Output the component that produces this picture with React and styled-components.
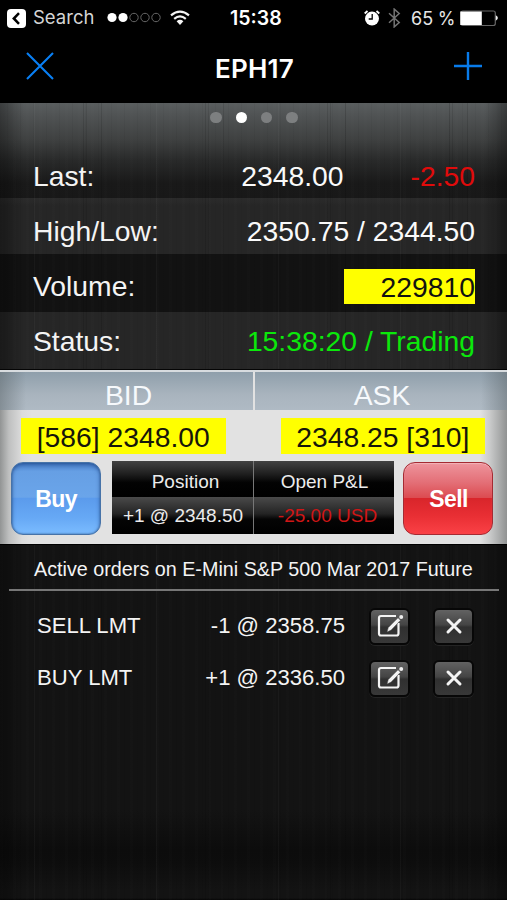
import React from "react";
import styled, { createGlobalStyle } from "styled-components";

const GlobalStyle = createGlobalStyle`
  * { box-sizing: border-box; }
  body { margin: 0; background: #000; }
`;

const brushed = `
  linear-gradient(90deg, rgba(0,0,0,.35) 0, rgba(0,0,0,.2) 10px, rgba(0,0,0,0) 24px, rgba(0,0,0,0) 485px, rgba(0,0,0,.35) 507px),
  repeating-linear-gradient(90deg, transparent 0 34px, rgba(255,255,255,.03) 34px 35px, transparent 35px 83px, rgba(0,0,0,.12) 83px 84px, transparent 84px 86px, rgba(0,0,0,.1) 86px 87px, transparent 87px 101px, rgba(0,0,0,.12) 101px 102px, transparent 102px 122px),
  repeating-linear-gradient(90deg, rgba(255,255,255,.008) 0 3px, transparent 3px 7px, rgba(0,0,0,.04) 7px 8px, transparent 8px 13px)`;

const Screen = styled.div`
  width: 507px;
  height: 900px;
  overflow: hidden;
  display: flex;
  flex-direction: column;
  background: #000;
  color: #f4f4f4;
  font-family: "Liberation Sans", Arial, sans-serif;
  white-space: nowrap;
`;

const StatusBar = styled.div`
  height: 36px;
  display: grid;
  grid-template-columns: 230px 54px 1fr;
  align-items: center;
  font-family: Inter, "Liberation Sans", sans-serif;
  font-size: 18.5px;
  color: #e6e6e6;
`;
const StatusGroup = styled.div`
  display: flex;
  align-items: center;
  height: 36px;
  padding-left: ${(p) => p.$left}px;
`;
const BackLabel = styled.span`
  width: 74px;
  margin: -2px 0 0 7px;
  color: #d5d5d5;
`;
const Clock = styled.span`
  font-weight: 600;
  font-size: 19.5px;
  color: #fff;
`;
const Percent = styled.span`
  width: 49px;
  margin-left: 10px;
  font-size: 18px;
  word-spacing: -0.5px;
`;

const NavBar = styled.div`
  height: 67px;
  display: grid;
  grid-template-columns: 80px 1fr 80px;
  align-items: start;
  padding-top: 16px;
`;
const NavIcon = styled.div`
  display: flex;
  padding-left: ${(p) => p.$left}px;
`;
const Title = styled.div`
  text-align: center;
  font: 600 26px/34px Inter, sans-serif;
  letter-spacing: 0.2px;
  color: #fff;
  padding-left: 2px;
`;

const PageDots = styled.div`
  display: flex;
  justify-content: center;
  gap: 14px;
  height: 45px;
  padding: 9px 0 0 1px;
`;
const Dot = styled.span`
  width: 11.4px;
  height: 11.4px;
  border-radius: 50%;
  background: ${(p) => (p.$active ? "#fff" : "#7d7f80")};
`;

const Summary = styled.div`
  height: 95px;
  background: ${brushed}, linear-gradient(#5a5e5f 0, #505354 12px, #3f4141 36px, #292a2a 57px, #191919 80px, #181818 95px);
`;
const QuoteRow = styled.div`
  height: ${(p) => p.$height}px;
  padding: ${(p) => p.$top}px 32px 0 33px;
  display: flex;
  align-items: center;
  font-size: 28.3px;
  line-height: 34px;
  ${(p) => p.$bg && `background: ${brushed}, ${p.$bg};`}
`;
const QuoteLabel = styled.span`
  flex: 1;
`;
const QuoteValue = styled.span`
  color: ${(p) => p.$color || "#fafafa"};
  margin-left: ${(p) => p.$gap || 0}px;
`;
const VolumeValue = styled.span`
  width: 131px;
  height: 35px;
  line-height: 36px;
  background: #ff0;
  color: #111;
  text-align: right;
`;

const TradePanel = styled.div`
  height: 175px;
  border-top: 1px solid #050505;
  background: linear-gradient(90deg, #929494 0, #bfc0c0 9px, #dcdcdc 22px, #e2e2e2 32px, #e2e2e2 480px, #c9caca 490px, #909292 507px);
`;
const SideHeads = styled.div`
  display: grid;
  grid-template-columns: 253px 252px;
  grid-template-rows: 38px;
  gap: 2px;
  height: 40px;
  border-top: 2px solid #d8dcdf;
`;
const SideHead = styled.div`
  background: linear-gradient(90deg, ${(p) => (p.$right ? "transparent 226px, rgba(90,100,105,.5) 252px" : "rgba(90,100,105,.5) 0, transparent 26px")}),
    linear-gradient(#8f9fab, #a9b4be 60%, #afbac4);
  color: #f6f9fc;
  font-size: 28.3px;
  line-height: 47px;
  padding-left: ${(p) => (p.$right ? 2 : 4)}px;
  text-align: center;
`;
const Prices = styled.div`
  display: flex;
  gap: 55px;
  padding: 8px 21px 0;
`;
const Price = styled.div`
  width: 204.5px;
  height: 36px;
  line-height: 38px;
  font-size: 28.3px;
  text-align: center;
  background: #ff0;
  color: #16160a;
`;
const TradeControls = styled.div`
  display: flex;
  align-items: flex-start;
  padding: 7px 14px 0 11px;
`;
const TradeButton = styled.button`
  width: 90px;
  height: 73px;
  margin: 1px 0 0;
  padding: 2px 0 0 ${(p) => (p.$sell ? 1 : 0)}px;
  border-radius: 12px;
  border: 1px solid ${(p) => (p.$sell ? "#a52a32" : "#4773a8")};
  background: ${(p) =>
    p.$sell
      ? "linear-gradient(#ee949c 0, #e36e76 28%, #dc4b50 49%, #d9252b 50%, #e92f34 75%, #fa4146 100%)"
      : "linear-gradient(#4b82cc 0, #669fe4 12%, #6aa5ea 48%, #5b9bec 50%, #67a9f5 78%, #7bbcff 100%)"};
  box-shadow: ${(p) => (p.$sell ? "inset 0 1px 1px rgba(255,255,255,.3)" : "inset 0 2px 4px rgba(22,60,125,.55), inset 0 0 2px #38639b")};
  color: #fff;
  font: bold 23px "Liberation Sans", Arial, sans-serif;
  letter-spacing: -0.6px;
`;
const PositionTable = styled.div`
  display: grid;
  grid-template-columns: 141px 140px;
  grid-template-rows: 36px 37px;
  column-gap: 1px;
  width: 282px;
  margin: 0 9px 0 11px;
  background: #777;
`;
const PositionCell = styled.div`
  background: ${(p) => (p.$value ? "linear-gradient(#4a4a4a, #242424 45%, #050505 60%, #000)" : "linear-gradient(#424242, #202020 35%, #030303 60%, #000)")};
  color: ${(p) => p.$color || "#ececec"};
  font-size: 19px;
  line-height: ${(p) => (p.$value ? 37 : 42)}px;
  padding-left: ${(p) => p.$left || 0}px;
  text-align: center;
`;

const Orders = styled.div`
  flex: 1;
  border-top: 1px solid #000;
  background: ${brushed}, linear-gradient(#131313 0, #131313 265px, #0c0c0c 305px, #0d0d0d 318px, #131313 345px, #131313 353px, #000 356px);
`;
const OrdersTitle = styled.h2`
  margin: 0 8px 0 9px;
  height: 46px;
  border-bottom: 2px solid #777;
  padding-left: 25px;
  font-size: 19.75px;
  font-weight: 400;
  line-height: 48px;
`;
const OrderRow = styled.div`
  display: grid;
  grid-template-columns: 130px 178px 40px 40px;
  column-gap: 24px;
  align-items: center;
  height: 52px;
  padding-left: 37px;
  font-size: 22.1px;
`;
const OrderList = styled.div`
  padding-top: 9px;
`;
const OrderPrice = styled.span`
  width: 178px;
  margin-left: -24px;
  text-align: right;
`;
const IconButton = styled.button`
  width: 41px;
  height: 37px;
  margin-left: -24px;
  padding: 0;
  border: 2px solid #070707;
  border-radius: 6px;
  background: linear-gradient(#626262, #444 45%, #303030 52%, #383838);
  box-shadow: 0 1px 0 #242424;
  display: flex;
  align-items: center;
  justify-content: center;
`;

const BackIcon = () => (
  <svg width="19" height="19" viewBox="0 0 19 19">
    <rect width="19" height="19" rx="4" fill="#fff" />
    <path d="M12 4.2 6.8 9.5 12 14.8" fill="none" stroke="#000" strokeWidth="2.5" />
  </svg>
);
const SignalIcon = () => (
  <svg width="63" height="12" viewBox="0 0 63 12">
    {[5, 16, 27, 38, 49].map((x, i) => (
      <circle key={x} cx={x} cy="5.5" r={i < 2 ? 4.6 : 4.2} fill={i < 2 ? "#fff" : "none"} stroke={i < 2 ? "none" : "#666"} strokeWidth="1" />
    ))}
  </svg>
);
const WifiIcon = () => (
  <svg width="20" height="16" viewBox="0 0 20 16" fill="none" stroke="#f5f5f5" strokeWidth="2.2">
    <path d="M1 5.4Q10-2 19 5.4M4.2 8.8Q10 4 15.8 8.8" />
    <path d="M6.6 11.2Q10 8.4 13.4 11.2L10 14.9Z" fill="#f5f5f5" stroke="none" />
  </svg>
);
const AlarmIcon = () => (
  <svg width="16" height="17" viewBox="0 0 16 17">
    <circle cx="8" cy="8.6" r="7" fill="#fff" />
    <path d="M.7 3.5 3.5 1M15.3 3.5 12.5 1" stroke="#fff" strokeWidth="1.8" />
    <path d="M8.2 4v5H4.7" stroke="#000" strokeWidth="1.3" fill="none" />
  </svg>
);
const BluetoothIcon = () => (
  <svg width="13" height="20" viewBox="0 0 13 20" fill="none" stroke="#747474" strokeWidth="1.5">
    <path d="m1 5.3 10.2 9.2-5 4.4V1.1l5 4.4L1 14.7" />
  </svg>
);
const BatteryIcon = () => (
  <svg width="40" height="17" viewBox="0 0 40 17">
    <rect x="0.8" y="1" width="34.5" height="14.5" rx="2" fill="none" stroke="#666" strokeWidth="1.2" />
    <path d="M.3 1.5h21.5v13.5H.3z" fill="#fff" />
    <path d="M35.8 5.3q4.2 2.7 0 5.4z" fill="#eee" />
  </svg>
);
const CloseIcon = () => (
  <svg width="28" height="28" viewBox="0 0 28 28" stroke="#087ff5" strokeWidth="2.1">
    <path d="m1 1 26 26M27 1 1 27" />
  </svg>
);
const AddIcon = () => (
  <svg width="28" height="28" viewBox="0 0 28 28" stroke="#087bea" strokeWidth="2.4">
    <path d="M14 0v28M0 14h28" />
  </svg>
);
const EditIcon = () => (
  <svg width="28" height="26" viewBox="0 0 28 26" fill="none" stroke="#f4f4f4">
    <path d="M20 3H5Q3 3 3 5v15.5q0 2 2 2h15.5q2 0 2-2V10" strokeWidth="2.2" />
    <path d="m11 19 1.3-4.4L22 4.8l2.5 2.5-9.3 9.8Z" fill="#f4f4f4" stroke="#484848" strokeWidth=".5" />
    <circle cx="25.2" cy="4" r="2" fill="#eee" stroke="none" />
  </svg>
);
const DeleteIcon = () => (
  <svg width="18" height="18" viewBox="0 0 18 18" stroke="#f4f4f4" strokeWidth="3" strokeLinecap="round">
    <path d="m3 3 12 12M15 3 3 15" />
  </svg>
);

const orders = [
  { type: "SELL LMT", price: "-1 @ 2358.75" },
  { type: "BUY LMT", price: "+1 @ 2336.50" },
];

export default function App() {
  return (
    <Screen>
      <GlobalStyle />
      <StatusBar>
        <StatusGroup $left={7}>
          <BackIcon />
          <BackLabel>Search</BackLabel>
          <SignalIcon />
          <WifiIcon />
        </StatusGroup>
        <Clock>15:38</Clock>
        <StatusGroup $left={80}>
          <AlarmIcon />
          <StatusGroup $left={8}>
            <BluetoothIcon />
          </StatusGroup>
          <Percent>65 %</Percent>
          <BatteryIcon />
        </StatusGroup>
      </StatusBar>
      <NavBar>
        <NavIcon $left={26}><CloseIcon /></NavIcon>
        <Title>EPH17</Title>
        <NavIcon $left={27}><AddIcon /></NavIcon>
      </NavBar>

      <Summary>
        <PageDots>
          <Dot /><Dot $active /><Dot /><Dot />
        </PageDots>
        <QuoteRow $height={50} $top={5}>
          <QuoteLabel>Last:</QuoteLabel>
          <QuoteValue>2348.00</QuoteValue>
          <QuoteValue $gap={67} $color="#e00b0b">-2.50</QuoteValue>
        </QuoteRow>
      </Summary>
      <QuoteRow $height={56} $top={10} $bg="linear-gradient(#2b2b2b, #262626 8px, #262626)">
        <QuoteLabel>High/Low:</QuoteLabel>
        <QuoteValue>2350.75 / 2344.50</QuoteValue>
      </QuoteRow>
      <QuoteRow $height={58} $top={6} $bg="linear-gradient(#121212, #121212)">
        <QuoteLabel>Volume:</QuoteLabel>
        <VolumeValue>229810</VolumeValue>
      </QuoteRow>
      <QuoteRow $height={57} $top={1} $bg="linear-gradient(#262626, #262626)">
        <QuoteLabel>Status:</QuoteLabel>
        <QuoteValue $color="#0be80b">15:38:20 / Trading</QuoteValue>
      </QuoteRow>

      <TradePanel>
        <SideHeads>
          <SideHead>BID</SideHead>
          <SideHead $right>ASK</SideHead>
        </SideHeads>
        <Prices>
          <Price>[586] 2348.00</Price>
          <Price>2348.25 [310]</Price>
        </Prices>
        <TradeControls>
          <TradeButton>Buy</TradeButton>
          <PositionTable>
            <PositionCell $left={6}>Position</PositionCell>
            <PositionCell $left={1}>Open P&amp;L</PositionCell>
            <PositionCell $value $left={1}>+1 @ 2348.50</PositionCell>
            <PositionCell $value $left={7} $color="#d01616">-25.00 USD</PositionCell>
          </PositionTable>
          <TradeButton $sell>Sell</TradeButton>
        </TradeControls>
      </TradePanel>

      <Orders>
        <OrdersTitle>Active orders on E-Mini S&amp;P 500 Mar 2017 Future</OrdersTitle>
        <OrderList>
          {orders.map((order) => (
            <OrderRow key={order.type}>
              <span>{order.type}</span>
              <OrderPrice>{order.price}</OrderPrice>
              <IconButton aria-label="Edit order"><EditIcon /></IconButton>
              <IconButton aria-label="Cancel order"><DeleteIcon /></IconButton>
            </OrderRow>
          ))}
        </OrderList>
      </Orders>
    </Screen>
  );
}
